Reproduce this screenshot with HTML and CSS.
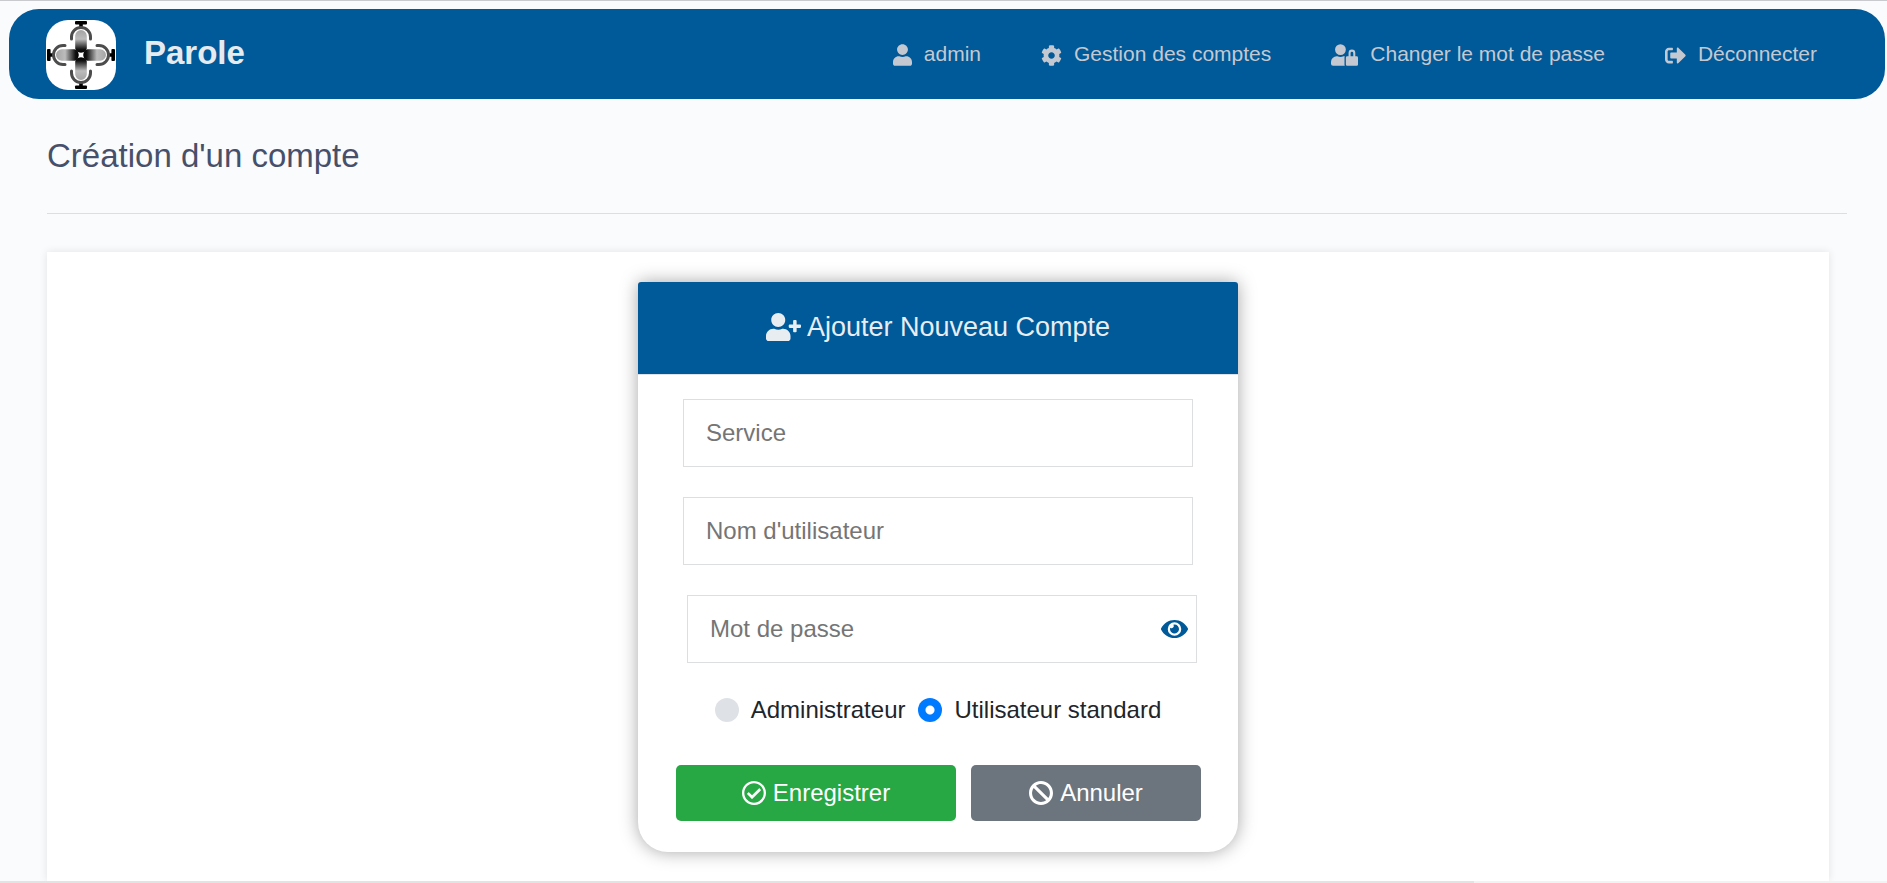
FILE: index.html
```html
<!DOCTYPE html>
<html lang="fr">
<head>
<meta charset="utf-8">
<title>Parole - Création d'un compte</title>
<meta name="viewport" content="width=device-width, initial-scale=1">
<link rel="stylesheet" href="styles.css">
</head>
<body>
<header class="navbar">
  <a class="brand" href="#">
    <svg class="brand-logo" viewBox="0 0 70 70" aria-hidden="true">
      <defs>
        <linearGradient id="capsule" x1="0" y1="0" x2="0" y2="1">
          <stop offset="0" stop-color="#a4a4a4"/>
          <stop offset="0.4" stop-color="#bcbcbc"/>
          <stop offset="0.6" stop-color="#707070"/>
          <stop offset="0.85" stop-color="#101010"/>
          <stop offset="1" stop-color="#000"/>
        </linearGradient>
        <g id="mic">
          <rect x="29" y="1" width="12" height="3.6" rx="1"/>
          <path d="M33.2 4h3.600v3h-3.600z"/>
          <path d="M25.500 19v-2a9.500 9.500 0 0 1 19 0v2" fill="none" stroke="#4c4c4c" stroke-width="3" stroke-linecap="round"/>
          <path d="M29.200 28.500V15.800a5.800 5.800 0 0 1 11.600 0V28.500Q40 32.300 35 32.800Q30 32.300 29.200 28.500z" fill="url(#capsule)"/>
        </g>
      </defs>
      <rect width="70" height="70" fill="#fff"/>
      <use href="#mic"/>
      <use href="#mic" transform="rotate(90 35 35)"/>
      <use href="#mic" transform="rotate(180 35 35)"/>
      <use href="#mic" transform="rotate(270 35 35)"/>
    </svg>
    <span class="brand-name">Parole</span>
  </a>
  <nav class="menu">
    <a class="menu-link" href="#">
      <svg class="icon-user" viewBox="0 0 448 512" aria-hidden="true"><path d="M224 256c70.7 0 128-57.3 128-128S294.7 0 224 0 96 57.3 96 128s57.3 128 128 128zm89.6 32h-16.7c-22.2 10.2-46.9 16-72.9 16s-50.6-5.8-72.9-16h-16.7C60.2 288 0 348.2 0 422.4V464c0 26.500 21.500 48 48 48h352c26.500 0 48-21.500 48-48v-41.600c0-74.200-60.200-134.400-134.400-134.400z"/></svg>
      <span>admin</span>
    </a>
    <a class="menu-link" href="#">
      <svg class="icon-cog" viewBox="0 0 512 512" aria-hidden="true"><path d="M487.4 315.7l-42.6-24.6c4.3-23.2 4.3-47 0-70.2l42.6-24.6c4.9-2.8 7.1-8.6 5.5-14-11.1-35.6-30-67.8-54.7-94.6-3.8-4.1-10-5.1-14.8-2.3L380.8 110c-17.9-15.4-38.5-27.3-60.8-35.1V25.8c0-5.6-3.9-10.5-9.4-11.7-36.7-8.2-74.3-7.8-109.2 0-5.5 1.2-9.4 6.1-9.4 11.7V75c-22.2 7.9-42.8 19.8-60.8 35.1L88.7 85.5c-4.9-2.8-11-1.9-14.8 2.3-24.7 26.7-43.6 58.9-54.7 94.6-1.7 5.4.6 11.2 5.5 14L67.3 221c-4.3 23.2-4.3 47 0 70.2l-42.6 24.6c-4.9 2.8-7.1 8.6-5.5 14 11.1 35.6 30 67.8 54.7 94.6 3.8 4.1 10 5.1 14.8 2.3l42.6-24.6c17.9 15.4 38.5 27.3 60.8 35.1v49.2c0 5.6 3.9 10.5 9.4 11.7 36.7 8.2 74.3 7.8 109.2 0 5.5-1.2 9.4-6.1 9.4-11.7v-49.2c22.2-7.9 42.8-19.8 60.8-35.1l42.6 24.6c4.9 2.8 11 1.9 14.8-2.3 24.7-26.7 43.6-58.9 54.7-94.6 1.5-5.5-.7-11.3-5.6-14.1zM256 336c-44.1 0-80-35.9-80-80s35.9-80 80-80 80 35.9 80 80-35.9 80-80 80z"/></svg>
      <span>Gestion des comptes</span>
    </a>
    <a class="menu-link" href="#">
      <svg class="icon-lock" viewBox="0 0 640 512" aria-hidden="true"><path d="M224 256A128 128 0 1 0 96 128a128 128 0 0 0 128 128zm96 64a63.080 63.080 0 0 1 8.100-30.500c-4.800-.5-9.500-1.500-14.500-1.500h-16.700a174.080 174.080 0 0 1-145.800 0h-16.700A134.430 134.430 0 0 0 0 422.400V464a48 48 0 0 0 48 48h280.900a63.540 63.540 0 0 1-8.900-32zm288-32h-32v-80a80 80 0 0 0-160 0v80h-32a32 32 0 0 0-32 32v160a32 32 0 0 0 32 32h224a32 32 0 0 0 32-32V320a32 32 0 0 0-32-32zM528 288h-64v-80a32 32 0 0 1 64 0z"/></svg>
      <span>Changer le mot de passe</span>
    </a>
    <a class="menu-link" href="#">
      <svg class="icon-exit" viewBox="0 0 512 512" aria-hidden="true"><path d="M497 273L329 441c-15 15-41 4.500-41-17v-96H152c-13.300 0-24-10.700-24-24v-96c0-13.300 10.700-24 24-24h136V88c0-21.400 25.900-32 41-17l168 168c9.300 9.400 9.300 24.600 0 34zM192 436v-40c0-6.600-5.400-12-12-12H96c-17.700 0-32-14.300-32-32V160c0-17.700 14.300-32 32-32h84c6.600 0 12-5.400 12-12V76c0-6.600-5.400-12-12-12H96c-53 0-96 43-96 96v192c0 53 43 96 96 96h84c6.600 0 12-5.400 12-12z"/></svg>
      <span>Déconnecter</span>
    </a>
  </nav>
</header>

<h1 class="page-title">Création d'un compte</h1>

<main class="panel">
  <form class="card">
    <h2 class="card-header">
      <svg class="icon-add" viewBox="0 0 640 512" aria-hidden="true"><path d="M624 208h-64v-64c0-8.800-7.200-16-16-16h-32c-8.800 0-16 7.200-16 16v64h-64c-8.800 0-16 7.200-16 16v32c0 8.800 7.200 16 16 16h64v64c0 8.800 7.200 16 16 16h32c8.800 0 16-7.200 16-16v-64h64c8.800 0 16-7.200 16-16v-32c0-8.800-7.200-16-16-16zm-400 48c70.700 0 128-57.300 128-128S294.700 0 224 0 96 57.300 96 128s57.300 128 128 128zm89.600 32h-16.700c-22.200 10.200-46.900 16-72.900 16s-50.600-5.800-72.900-16h-16.700C60.200 288 0 348.200 0 422.400V464c0 26.500 21.500 48 48 48h352c26.500 0 48-21.500 48-48v-41.600c0-74.200-60.200-134.400-134.400-134.400z"/></svg>
      <span>Ajouter Nouveau Compte</span>
    </h2>
    <div class="fields">
      <div class="field"><input class="field-input" type="text" name="service" placeholder="Service" aria-label="Service"></div>
      <div class="field"><input class="field-input" type="text" name="username" placeholder="Nom d'utilisateur" aria-label="Nom d'utilisateur"></div>
      <div class="field field-password">
        <input class="field-input" type="password" name="password" placeholder="Mot de passe" aria-label="Mot de passe">
        <button class="reveal" type="button" aria-label="Afficher le mot de passe">
          <svg class="icon-eye" viewBox="0 64 576 384" aria-hidden="true"><path d="M572.520 241.400C518.290 135.590 410.930 64 288 64S57.680 135.640 3.480 241.410a32.350 32.350 0 0 0 0 29.190C57.710 376.410 165.070 448 288 448s230.320-71.640 284.520-177.410a32.350 32.350 0 0 0 0-29.190zM288 400a144 144 0 1 1 144-144 143.930 143.930 0 0 1-144 144zm0-240a95.310 95.310 0 0 0-25.310 3.790 47.850 47.850 0 0 1-66.900 66.900A95.780 95.780 0 1 0 288 160z"/></svg>
        </button>
      </div>
    </div>
    <div class="roles">
      <label class="role"><input class="role-radio" type="radio" name="role" value="admin">Administrateur</label>
      <label class="role"><input class="role-radio" type="radio" name="role" value="standard" checked>Utilisateur standard</label>
    </div>
    <div class="actions">
      <button class="btn btn-save" type="submit">
        <svg class="icon-btn" viewBox="8 8 496 496" aria-hidden="true"><path d="M256 8C119.033 8 8 119.033 8 256s111.033 248 248 248 248-111.033 248-248S392.967 8 256 8zm0 48c110.532 0 200 89.451 200 200 0 110.532-89.451 200-200 200-110.532 0-200-89.451-200-200 0-110.532 89.451-200 200-200m140.204 130.267l-22.536-22.718c-4.667-4.705-12.265-4.736-16.970-.068L215.346 303.697l-59.792-60.277c-4.667-4.705-12.265-4.736-16.970-.069l-22.719 22.536c-4.705 4.667-4.736 12.265-.068 16.971l90.781 91.516c4.667 4.705 12.265 4.736 16.970.068l172.589-171.204c4.704-4.668 4.734-12.266.067-16.971z"/></svg>
        <span>Enregistrer</span>
      </button>
      <button class="btn btn-cancel" type="button">
        <svg class="icon-btn" viewBox="8 8 496 496" aria-hidden="true"><path d="M256 8C119.034 8 8 119.033 8 256s111.034 248 248 248 248-111.034 248-248S392.967 8 256 8zm130.108 117.892c65.448 65.448 70 165.481 20.677 235.637L150.470 105.216c70.204-49.356 170.226-44.735 235.638 20.676zM125.892 386.108c-65.448-65.448-70-165.481-20.677-235.637L361.530 406.784c-70.203 49.356-170.226 44.736-235.638-20.676z"/></svg>
        <span>Annuler</span>
      </button>
    </div>
  </form>
</main>
<div class="scroll-track"><div class="scroll-thumb"></div></div>
</body>
</html>
```
FILE: styles.css
```css
* {
  box-sizing: border-box;
}

body {
  margin: 0;
  min-height: 100vh;
  display: flex;
  flex-direction: column;
  border-top: 1px solid #c9cacd;
  background: #fafbfd;
  color: #212529;
  font-family: "Liberation Sans", Arial, sans-serif;
  font-size: 24px;
}

svg {
  display: block;
  flex: none;
  fill: currentColor;
}

/* Top navigation */
.navbar {
  display: flex;
  align-items: center;
  justify-content: space-between;
  margin: 8px 2px 0 9px;
  padding: 11px 68px 9px 37px;
  border-radius: 30px;
  background: #005998;
}

.brand {
  display: flex;
  align-items: center;
  gap: 28px;
  color: #e6ebf0;
  font-size: 33px;
  font-weight: bold;
  line-height: 36px;
  text-decoration: none;
}

.brand-logo {
  width: 70px;
  height: 70px;
  border-radius: 22px;
  fill: #000;
}

.brand-name {
  padding-bottom: 4px;
}

.menu {
  display: flex;
  gap: 60px;
}

.menu-link {
  display: flex;
  align-items: center;
  gap: 12px;
  color: #c4c9d1;
  font-size: 21px;
  line-height: 24px;
  text-decoration: none;
}

.menu-link span {
  padding-bottom: 2px;
}

.icon-user {
  width: 19px;
  height: 22px;
}

.icon-cog,
.icon-exit {
  width: 21px;
  height: 21px;
}

.icon-lock {
  width: 27px;
  height: 22px;
}

/* Page heading */
.page-title {
  margin: 0 40px 0 47px;
  padding: 37px 0 38px;
  border-bottom: 1px solid #dcdee2;
  color: #47506a;
  font-size: 33px;
  font-weight: normal;
  line-height: 39px;
}

/* Form card */
.panel {
  flex: 1;
  margin: 38px 58px 0 47px;
  padding: 30px 0 28px;
  background: #fff;
  box-shadow: 0 0 8px rgba(0, 0, 0, 0.1);
}

.card {
  width: 600px;
  max-width: 100%;
  margin: 0 auto;
  padding-bottom: 31px;
  border-radius: 4px 4px 30px 30px;
  background: #fff;
  box-shadow: 0 0 18px rgba(0, 0, 0, 0.35);
}

.card-header {
  display: flex;
  align-items: center;
  justify-content: center;
  gap: 6px;
  margin: 0;
  padding: 29px 20px 31px;
  border-bottom: 1px solid #dfe3e8;
  border-radius: 3px 3px 0 0;
  background: #005998;
  background-clip: padding-box;
  color: #e8edf2;
  font-size: 27px;
  font-weight: normal;
  line-height: 32px;
}

.icon-add {
  width: 35px;
  height: 28px;
}

.fields {
  display: flex;
  flex-direction: column;
  gap: 30px;
  padding: 24px 45px 0;
}

.field {
  display: flex;
}

.field-input {
  flex: 1;
  min-width: 0;
  height: 68px;
  padding: 0 22px;
  border: 1px solid #dcdee0;
  border-radius: 0;
  background: #fff;
  color: #212529;
  font: inherit;
}

.field-input::placeholder {
  color: #757575;
  opacity: 1;
}

.field-password {
  position: relative;
  margin: 0 -4px 0 4px;
}

.reveal {
  position: absolute;
  top: 0;
  right: 9px;
  bottom: 0;
  display: flex;
  align-items: center;
  padding: 0;
  border: 0;
  background: none;
  color: #005998;
  cursor: pointer;
}

.icon-eye {
  width: 27px;
  height: 18px;
}

.roles {
  display: flex;
  justify-content: center;
  gap: 13px;
  padding: 31px 0 39px;
}

.role {
  display: flex;
  align-items: center;
  gap: 12px;
  line-height: 32px;
}

.role-radio {
  appearance: none;
  width: 24px;
  height: 24px;
  margin: 0;
  border-radius: 50%;
  background: #dee2e6;
}

.role-radio:checked {
  background: radial-gradient(circle, #fff 4px, #007bff 5px);
}

.actions {
  display: flex;
  gap: 15px;
  padding: 0 37px 0 38px;
}

.btn {
  display: flex;
  align-items: center;
  justify-content: center;
  gap: 7px;
  height: 56px;
  padding: 0;
  border: 0;
  border-radius: 5px;
  color: #fff;
  font: inherit;
}

.btn-save {
  flex: 28 1 0;
  background: #28a745;
}

.btn-cancel {
  flex: 23 1 0;
  background: #6c757d;
}

.icon-btn {
  width: 24px;
  height: 24px;
}

/* Bottom strip */
.scroll-track {
  position: relative;
  background: #f2f2f3;
}

.scroll-thumb {
  width: 78.1%;
  height: 2px;
  background: #e3e3e3;
}
```
